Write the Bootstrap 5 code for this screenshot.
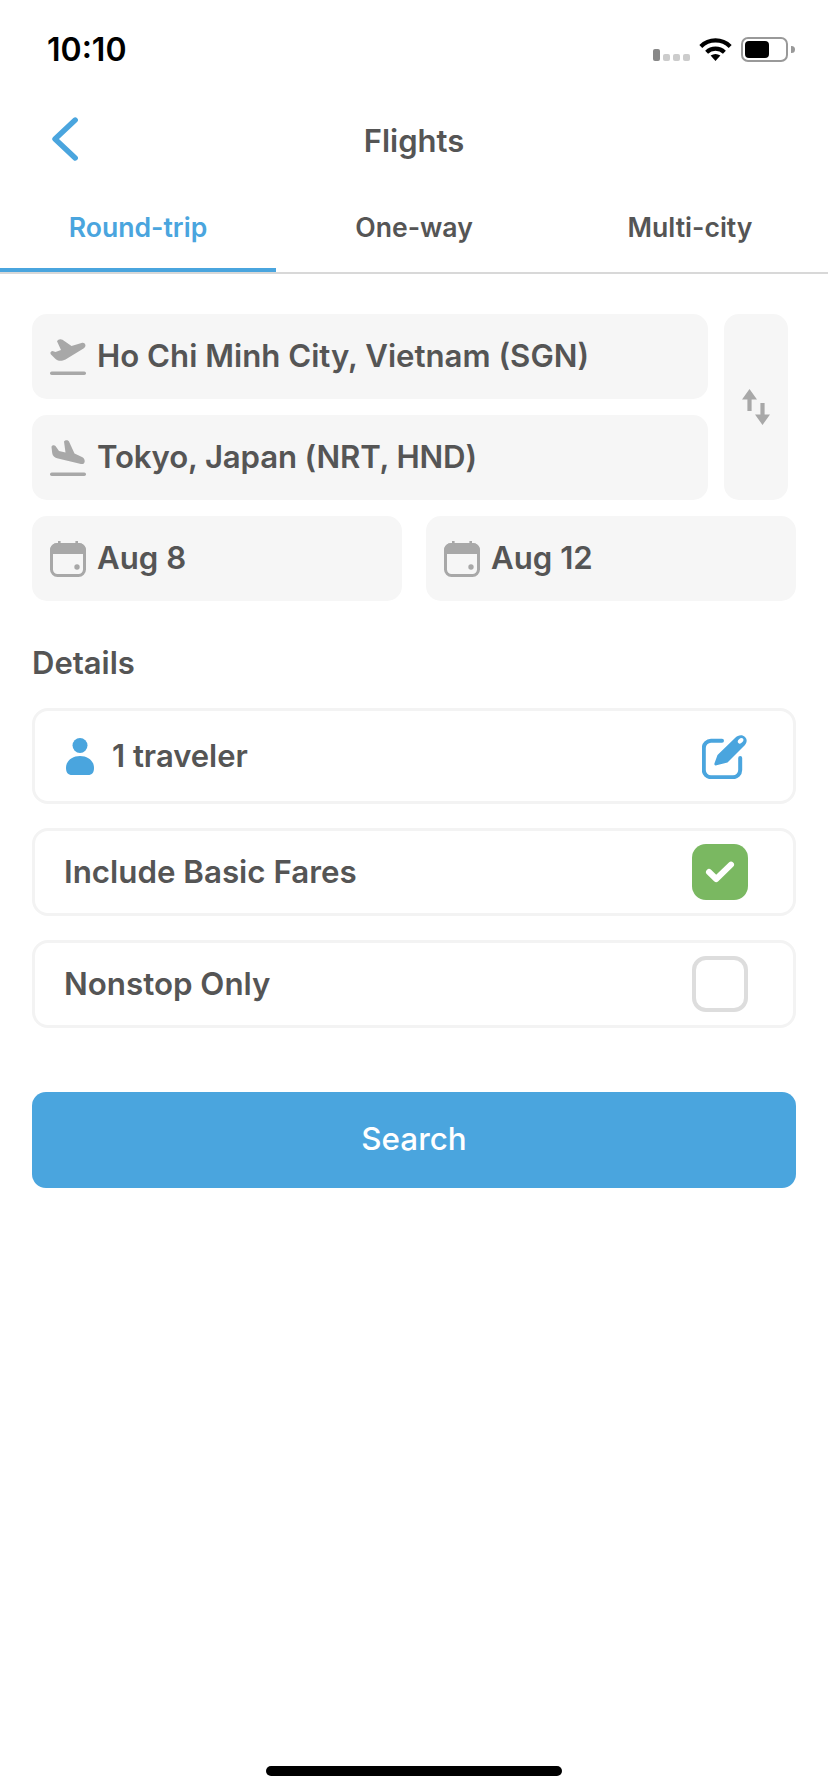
<!DOCTYPE html>
<html lang="en"><head><meta charset="utf-8">
<meta name="viewport" content="width=device-width, initial-scale=1">
<title>Flights</title>
<link href="https://cdn.jsdelivr.net/npm/bootstrap@5.3.0/dist/css/bootstrap.min.css" rel="stylesheet">
<style>
html,body{background:#fff}
.fly-app{width:828px;height:1792px;font-family:"Inter","Liberation Sans",sans-serif;color:#555;font-weight:600;overflow:hidden}
.fly-status{height:88px;padding:0 33px 0 47px;color:#000}
.fly-time{font-size:32px;font-weight:600;line-height:1;margin-top:11px}
.fly-icons{margin-top:10px}
.fly-sig{gap:3px;margin-right:9px;margin-top:12px}
.fly-sig i{display:block;width:7px;height:7px;border-radius:2px;background:#ccc}
.fly-sig i.on{height:12px;background:#888}
.fly-wifi{margin-right:9px}
.fly-batt{width:47px;height:25px;border:2px solid #999;border-radius:7px;padding:2px}
.fly-batt b{display:block;width:24px;height:100%;background:#000;border-radius:4px}
.fly-tip{width:4px;height:7px;background:#999;border-radius:0 4px 4px 0;margin-left:3px}
.fly-head{height:88px;padding:14px 0 0 52px}
.fly-back{width:26px;height:44px}
.fly-title{font-size:31px;left:0;right:0;top:0;bottom:0;padding-top:18px;pointer-events:none}
.fly-tabs{height:98px;border-bottom:2px solid #d8d8d8}
.fly-tab{width:276px;height:96px;font-size:26.6px;padding-top:7px}
.fly-tab.act{color:#4aa5de;border-bottom:4px solid #4aa5de;padding-top:11px}
.fly-form{padding:40px 32px 0}
.fly-col{gap:16px;width:676px}
.fly-field{background:#f6f6f6;border-radius:15px;height:85px;font-size:31.2px;padding-left:18px;gap:11px}
.fly-field .fly-narrow{letter-spacing:-.15px}
.fly-swap{background:#f6f6f6;border-radius:15px;width:64px}
.fly-pair{padding-right:8px;gap:16px}
.fly-dates{gap:24px;margin-top:16px}
.fly-dates .fly-field{flex:1 1 0}
.fly-det{font-size:31px;line-height:1;margin:46px 0 30px}
.fly-rows{gap:24px}
.fly-opt{border:3px solid #f3f3f3;border-radius:16px;height:88px;font-size:31.3px;padding:0 45px 0 29px}
.fly-opt.tall{height:96px;padding:0 46px 0 31px;font-size:31px}
.fly-who{gap:18px}
.fly-box{width:56px;height:56px;border-radius:14px}
.fly-box.ok{background:#7ab861}
.fly-box.off{border:4px solid #ddd}
.fly-search{background:#4aa5de;color:#fff;height:96px;border-radius:14px;font-size:31.4px;border:0;width:100%;font-weight:500;margin-top:64px}
.fly-search:hover,.fly-search:active{background:#4aa5de;color:#fff}
.fly-home{width:296px;height:10px;background:#000;border-radius:5px;margin-top:578px}
</style></head><body>
<div class="fly-app">
  <div class="fly-status d-flex justify-content-between align-items-center">
    <div class="fly-time">10:10</div>
    <div class="fly-icons d-flex align-items-center">
      <div class="fly-sig d-flex align-items-end"><i class="on"></i><i></i><i></i><i></i></div>
      <svg class="fly-wifi" width="33" height="24" viewBox="0 0 33 24" fill="none" stroke="#000" stroke-width="4.2"><path d="M1.8 9.4A21 21 0 0 1 31.2 9.4"/><path d="M7.6 15.2A13 13 0 0 1 25.4 15.2"/><path d="M11.6 18.6Q16.5 15.6 21.4 18.6L16.5 24Z" fill="#000" stroke="none"/></svg>
      <div class="fly-batt"><b></b></div><div class="fly-tip"></div>
    </div>
  </div>
  <div class="fly-head position-relative d-flex align-items-center">
    <svg class="fly-back" viewBox="0 0 26 44" fill="none" stroke="#4aa5de" stroke-width="5.4" stroke-linecap="round" stroke-linejoin="round"><polyline points="23.2,3 3,22 23.2,41"/></svg>
    <div class="fly-title position-absolute d-flex align-items-center justify-content-center">Flights</div>
  </div>
  <div class="fly-tabs d-flex">
    <div class="fly-tab act d-flex align-items-center justify-content-center">Round-trip</div>
    <div class="fly-tab d-flex align-items-center justify-content-center">One-way</div>
    <div class="fly-tab d-flex align-items-center justify-content-center">Multi-city</div>
  </div>
  <div class="fly-form">
    <div class="fly-pair d-flex">
      <div class="fly-col d-flex flex-column">
        <div class="fly-field d-flex align-items-center">
          <svg width="36" height="36" viewBox="0 0 36 36" fill="#a8a8a8"><path d="M7 2.2C8 .2 10.5-.5 12.5.8L21.5 7 31.5 4C35.5 3 37 7.5 33.5 9.5L15.5 20.5C11 22.8 7.5 22 5 19.5L1 15.5C-.3 13.8.8 12.2 2.5 12L5.5 13 11 11Z"/><rect y="32.5" width="36" height="3.5" rx="1.7"/></svg>
          <span>Ho Chi Minh City, Vietnam (SGN)</span>
        </div>
        <div class="fly-field d-flex align-items-center">
          <svg width="36" height="36" viewBox="0 0 36 36" fill="#a8a8a8"><path d="M14 1.5C15 0 18-.3 19 1.5L24.5 13.5 32 17C36 19 35.5 25 31 24L8 18.5C4.5 17.5 2.5 16 2.2 13L1.5 7C1.5 5 4.5 4.5 5.5 6L9 11 15.5 12.5Z"/><rect y="32.5" width="36" height="3.5" rx="1.7"/></svg>
          <span class="fly-narrow">Tokyo, Japan (NRT, HND)</span>
        </div>
      </div>
      <div class="fly-swap d-flex align-items-center justify-content-center">
        <svg width="28" height="36" viewBox="0 0 28 36" fill="#a8a8a8"><path d="M7.5 0L15 10.5H9.6V22H5.4V10.5H0Z"/><path d="M18.4 14H22.6V25.5H28L20.5 36 13 25.5H18.4Z"/></svg>
      </div>
    </div>
    <div class="fly-dates d-flex">
      <div class="fly-field d-flex align-items-center">
        <svg width="36" height="36" viewBox="0 0 36 36" fill="none"><rect x="1.5" y="3.5" width="33" height="31" rx="6" stroke="#a8a8a8" stroke-width="3"/><path d="M7 2H29A7 7 0 0 1 36 9V13H0V9A7 7 0 0 1 7 2Z" fill="#a8a8a8"/><rect x="8" width="2.6" height="5" fill="#a8a8a8"/><rect x="25.4" width="2.6" height="5" fill="#a8a8a8"/><circle cx="27" cy="26" r="2.7" fill="#a8a8a8"/></svg>
        <span>Aug 8</span>
      </div>
      <div class="fly-field d-flex align-items-center">
        <svg width="36" height="36" viewBox="0 0 36 36" fill="none"><rect x="1.5" y="3.5" width="33" height="31" rx="6" stroke="#a8a8a8" stroke-width="3"/><path d="M7 2H29A7 7 0 0 1 36 9V13H0V9A7 7 0 0 1 7 2Z" fill="#a8a8a8"/><rect x="8" width="2.6" height="5" fill="#a8a8a8"/><rect x="25.4" width="2.6" height="5" fill="#a8a8a8"/><circle cx="27" cy="26" r="2.7" fill="#a8a8a8"/></svg>
        <span>Aug 12</span>
      </div>
    </div>
    <div class="fly-det">Details</div>
    <div class="fly-rows d-flex flex-column">
      <div class="fly-opt tall d-flex align-items-center justify-content-between">
        <div class="fly-who d-flex align-items-center">
          <svg width="28" height="37" viewBox="0 0 28 37" fill="#4aa5de"><circle cx="14" cy="7.5" r="7.5"/><path d="M0 30C0 23 6 18 14 18S28 23 28 30C28 34.5 26 37 22 37H6C2 37 0 34.5 0 30Z"/></svg>
          <span>1 traveler</span>
        </div>
        <svg width="45" height="45" viewBox="0 0 45 45" fill="none"><path d="M20 6.8H9A7.2 7.2 0 0 0 1.8 14V36A7.2 7.2 0 0 0 9 43.2H31A7.2 7.2 0 0 0 38.2 36V24" stroke="#4aa5de" stroke-width="4" stroke-linecap="round"/><path d="M14.5 31.2C12.8 31.8 12 30.8 12.5 29.2L15.5 21 33 4C36 1.2 40 0 43 3 46 6 44.6 9.6 41.5 12.5L25.5 28.5Z" fill="#4aa5de"/><ellipse cx="38.6" cy="6.8" rx="3.2" ry="2.2" transform="rotate(-45 38.6 6.8)" fill="#fff"/></svg>
      </div>
      <div class="fly-opt d-flex align-items-center justify-content-between">
        <span>Include Basic Fares</span>
        <div class="fly-box ok d-flex align-items-center justify-content-center">
          <svg width="56" height="56" viewBox="0 0 56 56" fill="none" stroke="#fff" stroke-width="6" stroke-linecap="round" stroke-linejoin="round"><polyline points="17,28 24.2,35 39,20.6"/></svg>
        </div>
      </div>
      <div class="fly-opt d-flex align-items-center justify-content-between">
        <span>Nonstop Only</span>
        <div class="fly-box off"></div>
      </div>
    </div>
    <button type="button" class="btn fly-search d-block">Search</button>
  </div>
  <div class="fly-home mx-auto"></div>
</div>
<script src="https://cdn.jsdelivr.net/npm/bootstrap@5.3.0/dist/js/bootstrap.bundle.min.js"></script>
</body></html>
